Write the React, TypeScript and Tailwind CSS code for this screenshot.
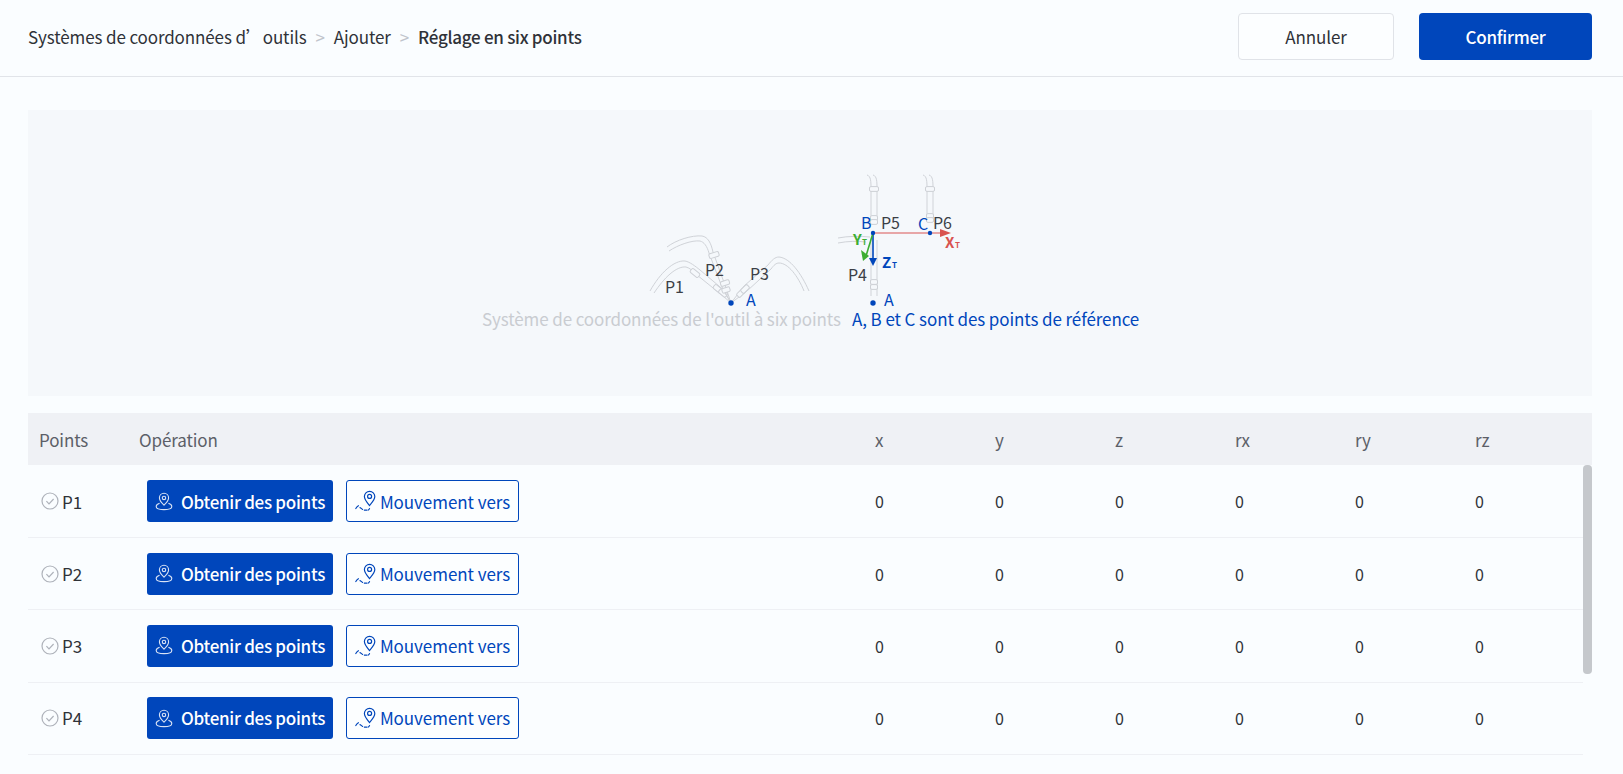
import React from "react";

const FONT = "[font-family:'Noto_Sans_CJK_SC','Noto_Sans',sans-serif]";
const rows = ["P1", "P2", "P3", "P4"];
const axes = ["x", "y", "z", "rx", "ry", "rz"];

function CheckCircle() {
  return (
    <svg width="18" height="18" viewBox="0 0 18 18" fill="none" className="shrink-0">
      <circle cx="9" cy="9" r="8" stroke="#aeb2ba" strokeWidth="1.2" />
      <path d="M5.4 9.2l2.6 2.6 4.6-4.8" stroke="#aeb2ba" strokeWidth="1.2" />
    </svg>
  );
}

function PinBase() {
  return (
    <svg width="18" height="19" viewBox="0 0 18 19" fill="none" className="shrink-0">
      <path d="M9 13.2C6.4 10.6 4.4 8.4 4.4 5.9a4.6 4.6 0 0 1 9.2 0c0 2.5-2 4.7-4.6 7.3z" stroke="#ffffff" strokeOpacity="0.85" strokeWidth="1.1" />
      <circle cx="9" cy="5.9" r="1.7" stroke="#ffffff" strokeOpacity="0.85" strokeWidth="1.1" />
      <path d="M4.6 11.2C2.6 11.9 1.2 13 1.2 14.4c0 2 3.4 3.2 7.8 3.2s7.8-1.2 7.8-3.2c0-1.4-1.4-2.5-3.4-3.2" stroke="#ffffff" strokeOpacity="0.85" strokeWidth="1.1" />
    </svg>
  );
}

function PinRoute() {
  return (
    <svg width="22" height="24" viewBox="0 0 22 24" fill="none" className="shrink-0">
      <path d="M14.5 16.5C11.8 13.4 9.4 10.8 9.4 7.6a5.2 5.2 0 0 1 10.4 0c0 3.2-2.6 5.8-5.3 8.9z" stroke="#0046bb" strokeWidth="1.2" />
      <circle cx="14.6" cy="7.4" r="2" stroke="#0046bb" strokeWidth="1.2" />
      <path d="M0.8 19.5c0.8-1.4 1.6-2.2 2.6-2.8M5 18.6c1 0.3 1.6 1.2 2.6 1.8M9.4 21.2h2.2M13 21.2c0.8-0.2 1.2-0.8 1.5-1.6" stroke="#0046bb" strokeWidth="1.2" strokeLinecap="round" />
    </svg>
  );
}

function Collar({ x, y, r, w = 10 }: { x: number; y: number; r: number; w?: number }) {
  return (
    <rect x={x - w / 2} y={y - 2.4} width={w} height={4.8} rx={1.4} fill="#f5f8fb" stroke="#cdd0d5" strokeWidth="1" transform={`rotate(${r} ${x} ${y})`} />
  );
}

function Illustration() {
  const hose = { fill: "none", stroke: "#d0d3d8", strokeWidth: 1 };
  const lbl = { fontSize: 16, fill: "#3c3f46" };
  const blue = { fontSize: 16, fill: "#0046bb" };
  return (
    <svg width="700" height="168" viewBox="460 169 700 168" className={FONT}>
      {/* P1 tool */}
      <path {...hose} d="M650 291C660 273 674 260 685 261C690 262 695 266 700 270L726 292" />
      <path {...hose} d="M654 293C664 278 676 266 686 267C690 268 693 271 697 275L723 296" />
      <Collar x={695} y={273} r={40} />
      <Collar x={718} y={289} r={40} w={10} />
      <Collar x={723} y={293} r={40} w={9} />
      <path {...hose} d="M725 293L731 303M723 296L731 303" />
      {/* P2 tool */}
      <path {...hose} d="M667 247C676 240 692 235 702 236C708 237 711 243 713 252L726 288L731 303" />
      <path {...hose} d="M669 251C678 245 692 240 700 241C704 242 707 246 709 253L722 287L731 303" />
      <Collar x={714} y={255} r={-18} />
      <Collar x={725} y={283} r={-18} w={9} />
      <Collar x={726} y={290} r={-18} w={8} />
      {/* P3 tool */}
      <path {...hose} d="M731 303L744 286L768 265C772 260 775 257 779 257C790 258 801 273 809 291" />
      <path {...hose} d="M731 303L747 291L771 269C774 265 776 263 779 263C788 263 798 276 804 291" />
      <Collar x={741} y={293} r={-45} w={9} />
      <Collar x={745} y={289} r={-45} w={9} />
      <circle cx="731" cy="303" r="2.7" fill="#0046bb" />

      {/* B tool */}
      <path {...hose} d="M867 175C871 176 871 182 871 189V224M873 175C877 176 877 182 877 189V224" />
      <Collar x={874} y={189} r={0} w={9} />
      <Collar x={874} y={218} r={0} w={7} />
      <Collar x={874} y={222} r={0} w={7} />
      <path {...hose} d="M871 240V296M877 240V296" />
      <Collar x={874} y={282} r={0} w={7} />
      <Collar x={874} y={287} r={0} w={7} />
      <path {...hose} d="M838 238C848 236 860 236 870 237M838 243C848 241 858 241 866 242" />
      {/* C tool */}
      <path {...hose} d="M923 175C927 176 927 182 927 189V222M929 175C933 176 933 182 933 189V222" />
      <Collar x={930} y={189} r={0} w={9} />
      <Collar x={930} y={216} r={0} w={7} />
      <Collar x={930} y={220} r={0} w={7} />

      {/* axes */}
      <path d="M873 233H942" stroke="#e28b8b" strokeWidth="1.6" />
      <path d="M940 229L951 233L940 237z" fill="#d9534f" />
      <path d="M873 233V260" stroke="#0046bb" strokeWidth="1.6" />
      <path d="M869 258H877L873 266z" fill="#0046bb" />
      <path d="M873 233L866 256" stroke="#3cae32" strokeWidth="1.6" />
      <path d="M861 250L869 256L863 261z" fill="#3cae32" />
      <circle cx="873" cy="233" r="2.2" fill="#0046bb" />
      <circle cx="930" cy="233" r="2.2" fill="#0046bb" />
      <circle cx="873" cy="303" r="2.7" fill="#0046bb" />

      {/* labels */}
      <text x="665" y="293" {...lbl}>P1</text>
      <text x="705" y="276" {...lbl}>P2</text>
      <text x="750" y="280" {...lbl}>P3</text>
      <text x="746" y="306" {...blue}>A</text>
      <text x="861" y="229" {...blue}>B</text>
      <text x="881" y="229" {...lbl}>P5</text>
      <text x="918" y="230" {...blue}>C</text>
      <text x="933" y="229" {...lbl}>P6</text>
      <text x="848" y="281" {...lbl}>P4</text>
      <text x="884" y="306" {...blue}>A</text>
      <text x="945" y="248" fontSize="15" fontWeight="700" fill="#d9534f">X</text>
      <text x="955" y="248" fontSize="8" fontWeight="700" fill="#d9534f">T</text>
      <text x="853" y="245" fontSize="15" fontWeight="700" fill="#3cae32">Y</text>
      <text x="862" y="245" fontSize="8" fontWeight="700" fill="#3cae32">T</text>
      <text x="882" y="268" fontSize="15" fontWeight="700" fill="#0046bb">Z</text>
      <text x="892" y="268" fontSize="8" fontWeight="700" fill="#0046bb">T</text>

      <text x="482" y="326" fontSize="17" letterSpacing="-0.11" fill="#c9ccd1">Système de coordonnées de l'outil à six points</text>
      <text x="852" y="326" fontSize="17" letterSpacing="-0.09" fill="#0046bb">A, B et C sont des points de référence</text>
    </svg>
  );
}

export default function App() {
  return (
    <div className={`${FONT} h-screen w-full overflow-hidden bg-[#fafdff] text-[17px] tracking-[-0.12px] text-[#2f3238]`}>
      <header className="flex h-[77px] items-center justify-between border-b border-[#e1e4e9] pb-[3px] pl-[28px] pr-[31px]">
        <nav className="flex items-center">
          <span>Systèmes de coordonnées d’outils</span>
          <span className="mx-[9px] text-[#c0c4cc]">&gt;</span>
          <span>Ajouter</span>
          <span className="mx-[9px] text-[#c0c4cc]">&gt;</span>
          <span className="font-medium tracking-[-0.28px]">Réglage en six points</span>
        </nav>
        <div className="flex items-center gap-[25px]">
          <button className="flex h-[47px] w-[156px] items-center justify-center rounded border border-[#e0e3e8] bg-[#fcfeff]">Annuler</button>
          <button className="flex h-[47px] w-[173px] items-center justify-center rounded bg-[#0046bb] font-medium tracking-[-0.28px] text-white">Confirmer</button>
        </div>
      </header>

      <main className="pl-[28px] pr-[31px] pt-[33px]">
        <section className="flex h-[286px] items-center justify-center bg-[#f5f8fb]">
          <Illustration />
        </section>

        <div className="mt-[17px] flex h-[52px] items-center bg-[#eff1f5] pt-[1px] text-[#5c6068]">
          <div className="w-[111px] shrink-0 pl-[11px]">Points</div>
          <div className="w-[736px] shrink-0">Opération</div>
          {axes.map((a) => (
            <div key={a} className="w-[120px] shrink-0">{a}</div>
          ))}
        </div>

        <div className="relative h-[301px] overflow-hidden pt-[0.75px]">
          <div className="w-[1555px]">
            {rows.map((p) => (
              <div key={p} className="flex h-[72.25px] items-center border-b border-[#eef0f4]">
                <div className="flex w-[111px] shrink-0 items-center gap-[3px] pl-[13px]">
                  <CheckCircle />
                  <span>{p}</span>
                </div>
                <div className="flex w-[736px] shrink-0 items-center gap-[13px] pl-[8px]">
                  <button className="flex h-[42px] w-[186px] items-center justify-center gap-[8px] rounded-[3px] bg-[#0046bb] font-medium tracking-[-0.28px] text-white">
                    <PinBase />
                    <span>Obtenir des points</span>
                  </button>
                  <button className="flex h-[42px] w-[173px] items-center justify-center gap-[3px] rounded-[3px] border border-[#0046bb] bg-[#fcfeff] tracking-[-0.06px] text-[#0046bb]">
                    <PinRoute />
                    <span>Mouvement vers</span>
                  </button>
                </div>
                {axes.map((a) => (
                  <div key={a} className="w-[120px] shrink-0 text-[16px]">0</div>
                ))}
              </div>
            ))}
          </div>
          <div className="absolute right-0 top-0 h-[209px] w-[9px] rounded-[4px] bg-[#c5c8cc]" />
        </div>
      </main>
    </div>
  );
}
